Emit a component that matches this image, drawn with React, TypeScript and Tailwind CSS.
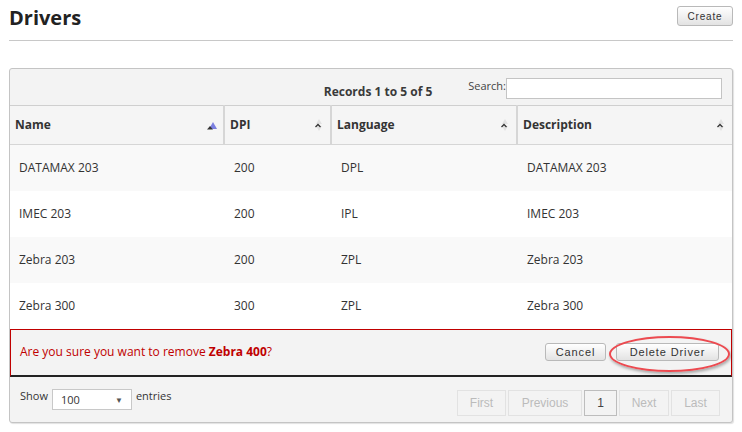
import React from "react";

const ROWS = [
  { name: "DATAMAX 203", dpi: "200", lang: "DPL", desc: "DATAMAX 203" },
  { name: "IMEC 203", dpi: "200", lang: "IPL", desc: "IMEC 203" },
  { name: "Zebra 203", dpi: "200", lang: "ZPL", desc: "Zebra 203" },
  { name: "Zebra 300", dpi: "300", lang: "ZPL", desc: "Zebra 300" },
];

function SortIcon({ active }: { active?: boolean }) {
  return (
    <svg width="12" height="14" viewBox="0 0 12 14" className="shrink-0">
      {active ? (
        <>
          <path d="M3 11 L7 4 L11 11 Z" fill="#7b7fe0" />
          <path d="M1 11.5 L4 8 L7 11.5 Z" fill="#333" />
        </>
      ) : (
        <>
          <path d="M6 1 L9 6 L3 6 Z" fill="#e2e2e2" />
          <path d="M6 13 L9 8 L3 8 Z" fill="#e2e2e2" />
          <path d="M2.5 9 L5 6.5 L7.5 9" fill="none" stroke="#333" strokeWidth="1.3" />
        </>
      )}
    </svg>
  );
}

const btn =
  "border border-[#b9b9b9] rounded-[3px] bg-gradient-to-b from-white to-[#e3e3e3] text-[#333] font-['Liberation_Sans',Arial,sans-serif] tracking-[0.08em]";

export default function App() {
  return (
    <div className="w-[742px] h-[432px] bg-white font-['Open_Sans',sans-serif] text-[#333] overflow-hidden">
      <div className="mx-[9px] flex items-start justify-between pt-[4px] pb-[9px] border-b border-[#c8c8c8]">
        <h1 className="text-[20px] font-bold text-[#222] leading-[27px]">Drivers</h1>
        <button className={`${btn} mt-[2px] text-[10px] h-[20px] w-[56px]`}>Create</button>
      </div>

      <div className="mx-[9px] mt-[27px] border border-[#c4c4c4] rounded-[3px] bg-[#f3f3f3] shadow-[1px_1px_1px_rgba(0,0,0,0.12)] overflow-hidden">
        {/* toolbar */}
        <div className="h-[36px] flex items-center pr-[10px]">
          <div className="flex-1" />
          <span className="text-[12px] font-bold text-[#3a3a3a] mt-[10px] ml-[210px]">Records 1 to 5 of 5</span>
          <span className="text-[11px] text-[#444] ml-[36px] mb-[1px]">Search:</span>
          <input className="w-[216px] h-[21px] mt-[3px] bg-white border border-[#c4c4c4] outline-none" />
        </div>

        {/* table */}
        <table className="w-full border-collapse text-[12px]">
          <thead>
            <tr className="h-[39px] bg-[#f5f5f5]">
              {[
                { t: "Name", w: "w-[214px]", a: true },
                { t: "DPI", w: "w-[107px]" },
                { t: "Language", w: "w-[186px]" },
                { t: "Description", w: "" },
              ].map((c, i) => (
                <th
                  key={c.t}
                  className={`${c.w} border-t border-[#cfcfcf] ${i > 0 ? "border-l-2 border-l-[#d6d6d6]" : ""} px-[5px] text-left font-bold text-[#333]`}
                >
                  <div className="flex items-center justify-between">
                    <span>{c.t}</span>
                    <SortIcon active={c.a} />
                  </div>
                </th>
              ))}
            </tr>
          </thead>
          <tbody>
            {ROWS.map((r, i) => (
              <tr key={r.name} className={`h-[46px] ${i % 2 === 0 ? "bg-[#f9f9f9]" : "bg-white"} ${i === 0 ? "border-t border-[#d6d6d6]" : ""}`}>
                <td className="pl-[9px]">{r.name}</td>
                <td className="pl-[10px]">{r.dpi}</td>
                <td className="pl-[10px]">{r.lang}</td>
                <td className="pl-[10px]">{r.desc}</td>
              </tr>
            ))}
          </tbody>
        </table>

        {/* confirm bar */}
        <div className="relative h-[48px] border border-[#c00000] border-b-[#222] border-b-2 flex items-center pl-[9px] pr-[12px]">
          <span className="text-[12px] text-[#c00000]">
            Are you sure you want to remove <b className="font-bold">Zebra 400</b>?
          </span>
          <div className="flex-1" />
          <button className={`${btn} h-[18px] w-[61px] text-[11px]`}>Cancel</button>
          <button className={`${btn} ml-[10px] h-[18px] w-[103px] text-[11px]`}>Delete Driver</button>
          <div className="absolute left-[598px] top-[6px] w-[121px] h-[36px] rounded-[50%] border-2 border-[#ec4a50] shadow-[1px_2px_3px_rgba(0,0,0,0.3)] pointer-events-none" />
        </div>

        {/* footer */}
        <div className="h-[45px] flex items-center pl-[10px] pr-[12px]">
          <span className="text-[11px] text-[#333] mb-[5px]">Show</span>
          <div className="ml-[4px] mt-[1px] w-[80px] h-[21px] bg-white border border-[#c8c8c8] flex items-center justify-between px-[8px] text-[11px]">
            <span className="mt-[2px]">100</span>
            <span className="text-[8px] text-[#555]">▼</span>
          </div>
          <span className="ml-[4px] mb-[5px] text-[11px] text-[#333]">entries</span>
          <div className="flex-1" />
          <div className="flex gap-[2px] mt-[7px] text-[12px] font-['Liberation_Sans',Arial,sans-serif]">
            {["First", "Previous", "1", "Next", "Last"].map((p) => (
              <span
                key={p}
                className={`h-[26px] flex items-center justify-center border ${p === "1" ? "border-[#bdbdbd] text-[#444] w-[33px] bg-[#f3f3f3]" : "border-[#e2e2e2] text-[#bbb]"} ${p === "First" ? "w-[49px]" : ""} ${p === "Previous" ? "w-[74px]" : ""} ${p === "Next" ? "w-[50px]" : ""} ${p === "Last" ? "w-[49px]" : ""}`}
              >
                {p}
              </span>
            ))}
          </div>
        </div>
      </div>
    </div>
  );
}
